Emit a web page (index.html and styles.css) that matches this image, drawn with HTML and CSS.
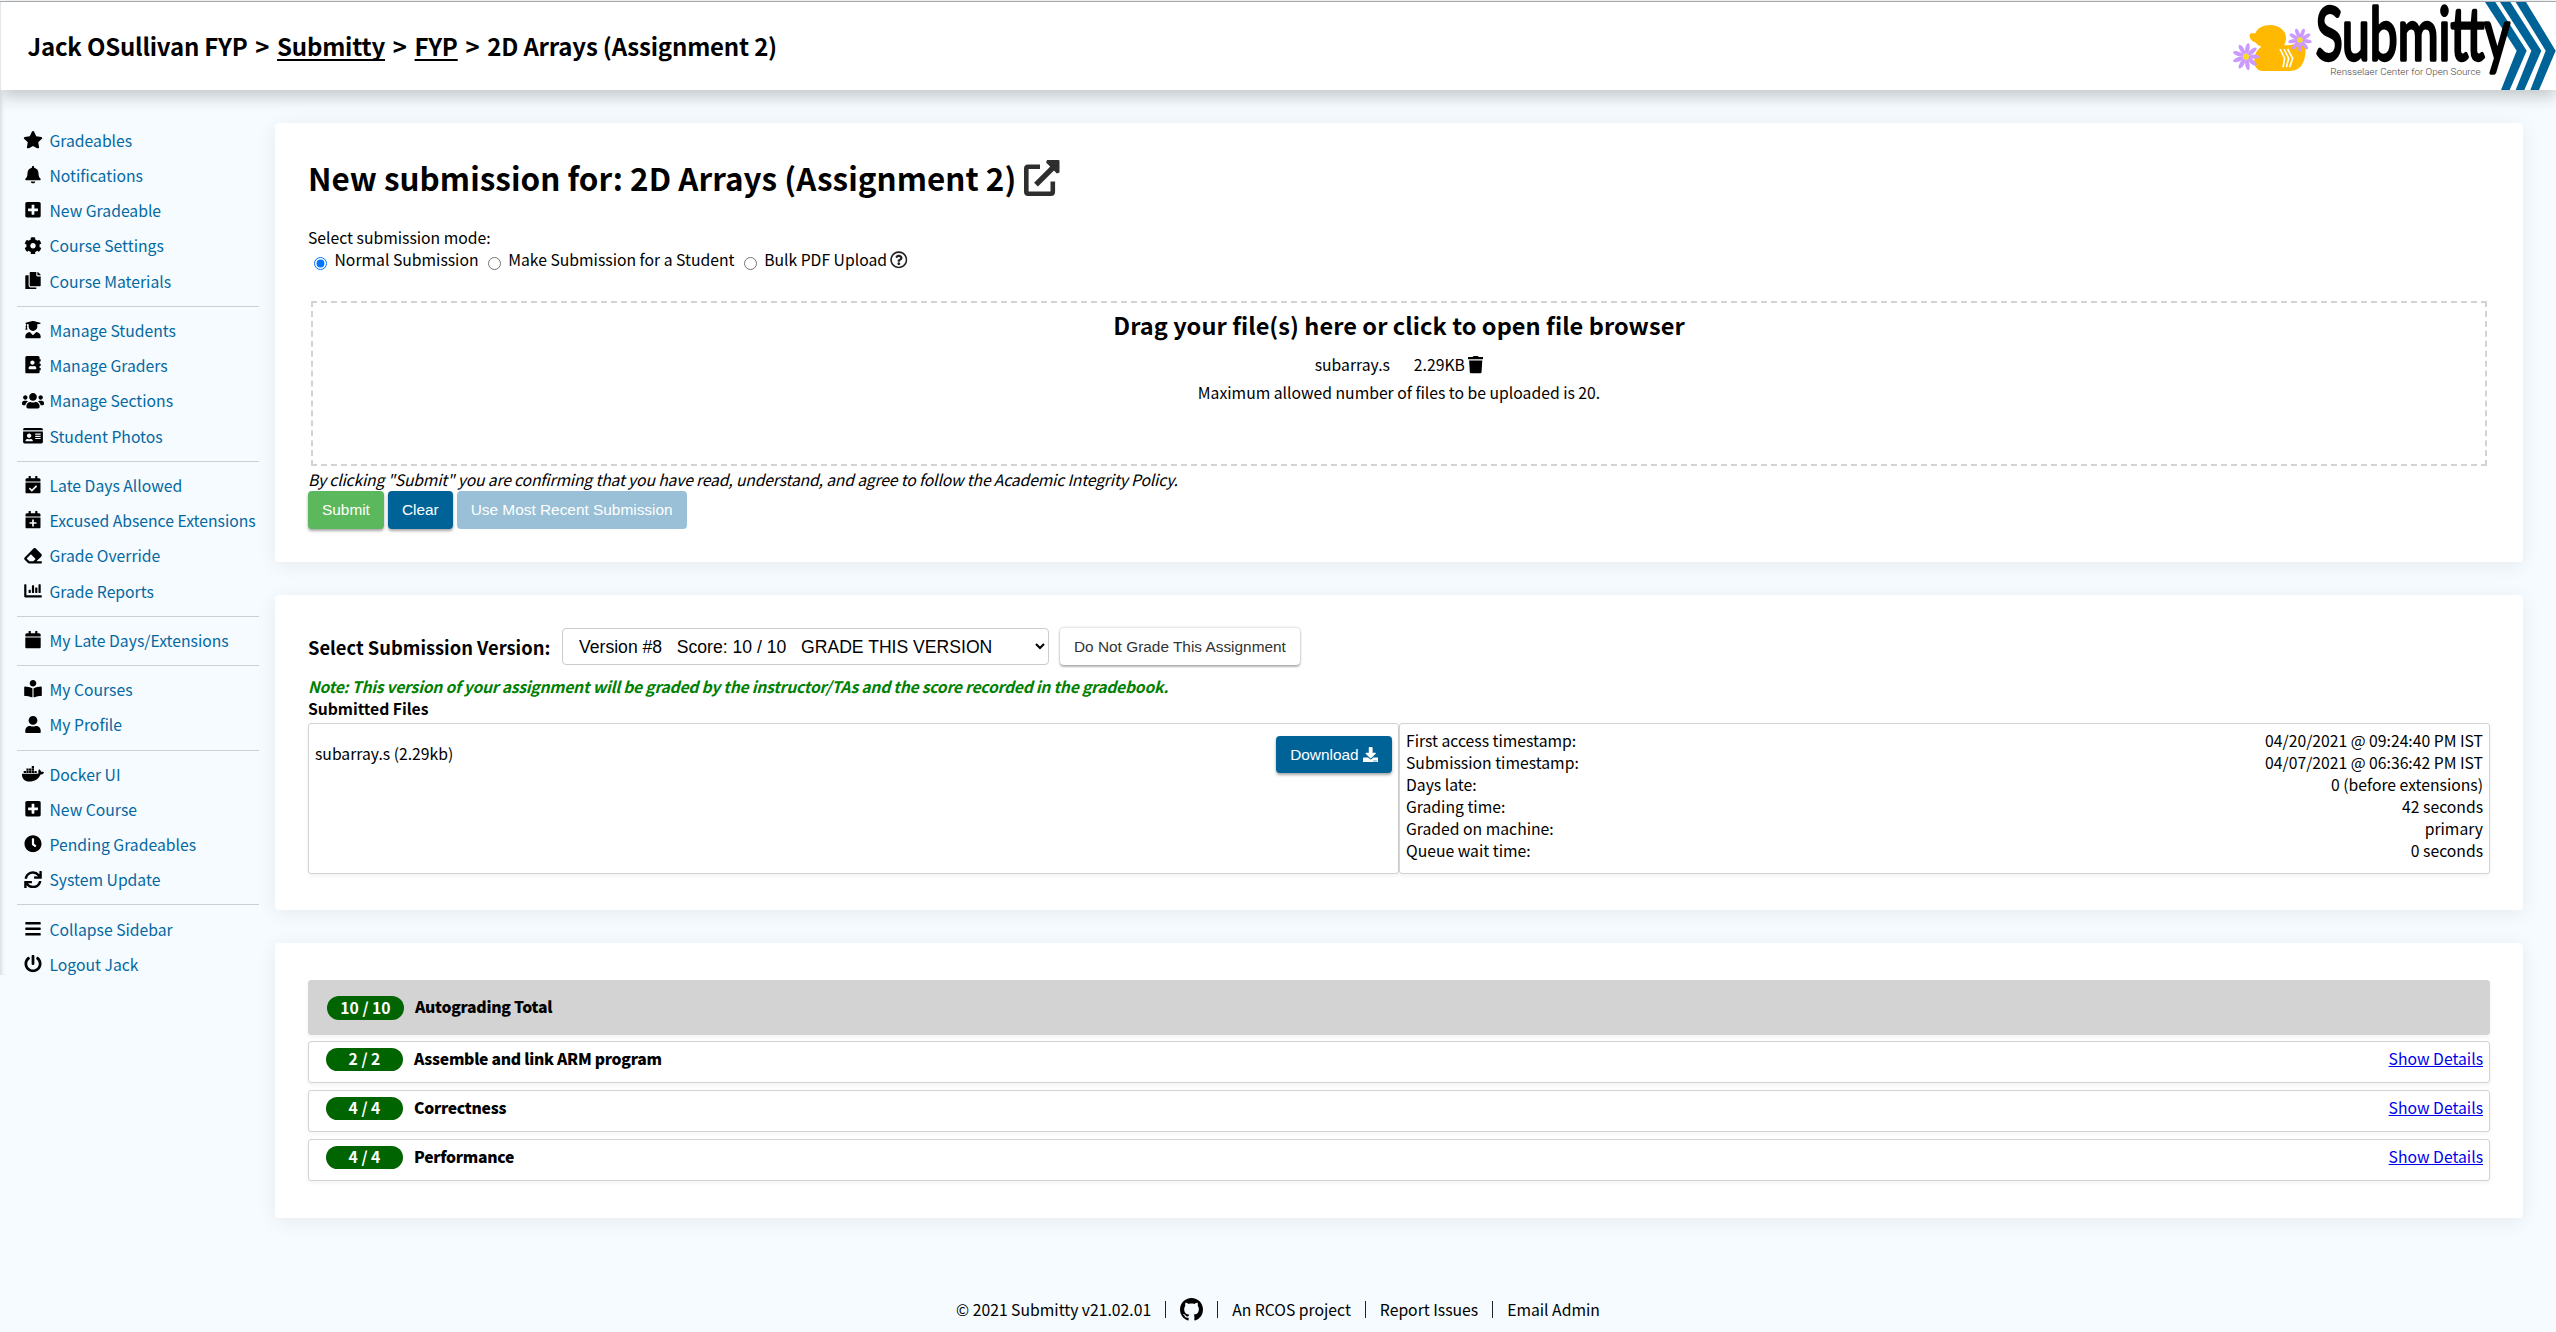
FILE: index.html
```html
<!DOCTYPE html>
<html lang="en">
<head>
<meta charset="utf-8">
<title>Submitty - 2D Arrays (Assignment 2)</title>
<link rel="stylesheet" href="styles.css">
</head>
<body>
<svg class="sprite" xmlns="http://www.w3.org/2000/svg">
  <symbol id="star" viewBox="0 0 576 512"><path d="M259.3 17.8L194 150.2 47.9 171.5c-26.2 3.8-36.7 36.1-17.7 54.6l105.7 103-25 145.5c-4.5 26.3 23.2 46 46.4 33.7L288 439.6l130.7 68.7c23.2 12.2 50.9-7.4 46.4-33.7l-25-145.5 105.7-103c19-18.5 8.5-50.8-17.7-54.6L382 150.2 316.7 17.8c-11.7-23.6-45.6-23.9-57.4 0z"/></symbol>
  <symbol id="bell" viewBox="0 0 448 512"><path d="M224 512c35.32 0 63.97-28.65 63.97-64H160.03c0 35.35 28.65 64 63.97 64zm215.39-149.71c-19.32-20.76-55.47-51.99-55.47-154.29 0-77.7-54.48-139.9-127.94-155.16V32c0-17.67-14.32-32-31.98-32s-31.98 14.33-31.98 32v20.84C118.56 68.1 64.08 130.3 64.08 208c0 102.3-36.15 133.53-55.47 154.29-6 6.45-8.66 14.16-8.61 21.71.11 16.4 12.98 32 32.1 32h383.8c19.12 0 32-15.6 32.1-32 .05-7.55-2.61-15.27-8.61-21.71z"/></symbol>
  <symbol id="plus-square" viewBox="0 0 448 512"><path d="M400 32H48C21.5 32 0 53.5 0 80v352c0 26.5 21.5 48 48 48h352c26.5 0 48-21.5 48-48V80c0-26.5-21.5-48-48-48zm-32 252c0 6.6-5.4 12-12 12h-92v92c0 6.6-5.4 12-12 12h-56c-6.6 0-12-5.4-12-12v-92H92c-6.6 0-12-5.4-12-12v-56c0-6.6 5.4-12 12-12h92v-92c0-6.6 5.4-12 12-12h56c6.6 0 12 5.4 12 12v92h92c6.6 0 12 5.4 12 12v56z"/></symbol>
  <symbol id="cog" viewBox="0 0 512 512"><path d="M487.4 315.7l-42.6-24.6c4.3-23.2 4.3-47 0-70.2l42.6-24.6c4.9-2.8 7.1-8.6 5.5-14-11.1-35.6-30-67.8-54.7-94.6-3.8-4.1-10-5.1-14.8-2.3L380.8 110c-17.9-15.4-38.5-27.3-60.8-35.1V25.8c0-5.6-3.9-10.5-9.4-11.7-36.7-8.2-74.3-7.8-109.2 0-5.5 1.2-9.4 6.1-9.4 11.7V75c-22.2 7.9-42.8 19.8-60.8 35.1L88.7 85.5c-4.9-2.8-11-1.9-14.8 2.3-24.7 26.7-43.6 58.9-54.7 94.6-1.7 5.4.6 11.2 5.5 14L67.3 221c-4.3 23.2-4.3 47 0 70.2l-42.6 24.6c-4.9 2.8-7.1 8.6-5.5 14 11.1 35.6 30 67.8 54.7 94.6 3.8 4.1 10 5.1 14.8 2.3l42.6-24.6c17.9 15.4 38.5 27.3 60.8 35.1v49.2c0 5.6 3.9 10.5 9.4 11.7 36.7 8.2 74.3 7.8 109.2 0 5.5-1.2 9.4-6.1 9.4-11.7v-49.2c22.2-7.9 42.8-19.8 60.8-35.1l42.6 24.6c4.9 2.8 11 1.9 14.8-2.3 24.7-26.7 43.6-58.9 54.7-94.6 1.5-5.5-.7-11.3-5.6-14.1zM256 336c-44.1 0-80-35.9-80-80s35.9-80 80-80 80 35.9 80 80-35.9 80-80 80z"/></symbol>
  <symbol id="copy" viewBox="0 0 448 512"><path d="M320 448v40c0 13.255-10.745 24-24 24H24c-13.255 0-24-10.745-24-24V120c0-13.255 10.745-24 24-24h72v296c0 30.879 25.121 56 56 56h168zm0-344V0H152c-13.255 0-24 10.745-24 24v368c0 13.255 10.745 24 24 24h272c13.255 0 24-10.745 24-24V128H344c-13.2 0-24-10.8-24-24zm120.971-31.029L375.029 7.029A24 24 0 0 0 358.059 0H352v96h96v-6.059a24 24 0 0 0-7.029-16.97z"/></symbol>
  <symbol id="graduate" viewBox="0 0 448 512"><path d="M319.4 320.6L224 416l-95.4-95.4C57.1 323.7 0 382.2 0 454.4v9.6c0 26.5 21.5 48 48 48h352c26.5 0 48-21.5 48-48v-9.6c0-72.2-57.1-130.7-128.6-133.8zM13.6 79.8l6.4 1.5v58.4c-7 4.2-12 11.5-12 20.3 0 8.4 4.6 15.4 11.1 19.7L3.5 242c-1.7 6.9 2.1 14 7.6 14h41.8c5.5 0 9.3-7.1 7.6-14l-15.6-62.3C51.4 175.4 56 168.4 56 160c0-8.8-5-16.1-12-20.3V87.1l66 15.9c-8.6 17.2-14 36.4-14 57 0 70.7 57.3 128 128 128s128-57.3 128-128c0-20.6-5.3-39.8-14-57l96.3-23.2c18.2-4.4 18.2-27.1 0-31.5l-190.4-46c-13-3.1-26.7-3.1-39.7 0L13.6 48.2c-18.1 4.4-18.1 27.2 0 31.6z"/></symbol>
  <symbol id="address-book" viewBox="0 0 448 512"><path d="M436 160c6.6 0 12-5.4 12-12v-40c0-6.6-5.4-12-12-12h-20V48c0-26.5-21.5-48-48-48H48C21.5 0 0 21.5 0 48v416c0 26.5 21.5 48 48 48h320c26.5 0 48-21.5 48-48v-48h20c6.6 0 12-5.4 12-12v-40c0-6.6-5.4-12-12-12h-20v-64h20c6.6 0 12-5.4 12-12v-40c0-6.6-5.4-12-12-12h-20v-64h20zm-228-32c35.3 0 64 28.7 64 64s-28.7 64-64 64-64-28.7-64-64 28.7-64 64-64zm112 236.8c0 10.6-10 19.2-22.4 19.2H118.4C106 384 96 375.4 96 364.8v-19.2c0-31.8 30.1-57.6 67.2-57.6h5c12.3 5.1 25.7 8 39.8 8s27.6-2.9 39.8-8h5c37.1 0 67.2 25.8 67.2 57.6v19.2z"/></symbol>
  <symbol id="users" viewBox="0 0 640 512"><path d="M96 224c35.3 0 64-28.7 64-64s-28.7-64-64-64-64 28.7-64 64 28.7 64 64 64zm448 0c35.3 0 64-28.7 64-64s-28.7-64-64-64-64 28.7-64 64 28.7 64 64 64zm32 32h-64c-17.6 0-33.5 7.1-45.1 18.6 40.3 22.1 68.9 62 75.1 109.4h66c17.7 0 32-14.3 32-32v-32c0-35.3-28.7-64-64-64zm-256 0c61.9 0 112-50.1 112-112S381.9 32 320 32 208 82.1 208 144s50.1 112 112 112zm76.8 32h-8.3c-20.8 10-43.9 16-68.5 16s-47.6-6-68.5-16h-8.3C179.6 288 128 339.6 128 403.2V432c0 26.5 21.5 48 48 48h288c26.5 0 48-21.5 48-48v-28.8c0-63.6-51.6-115.2-115.2-115.2zm-223.7-13.4C161.5 263.1 145.6 256 128 256H64c-35.3 0-64 28.7-64 64v32c0 17.7 14.3 32 32 32h65.9c6.3-47.4 34.9-87.3 75.2-109.4z"/></symbol>
  <symbol id="id-card" viewBox="0 0 576 512"><path d="M528 32H48C21.5 32 0 53.5 0 80v16h576V80c0-26.5-21.5-48-48-48zM0 432c0 26.5 21.5 48 48 48h480c26.5 0 48-21.5 48-48V128H0v304zm352-232c0-4.4 3.6-8 8-8h144c4.4 0 8 3.6 8 8v16c0 4.4-3.6 8-8 8H360c-4.4 0-8-3.6-8-8v-16zm0 64c0-4.4 3.6-8 8-8h144c4.4 0 8 3.6 8 8v16c0 4.4-3.6 8-8 8H360c-4.4 0-8-3.6-8-8v-16zm0 64c0-4.4 3.6-8 8-8h144c4.4 0 8 3.6 8 8v16c0 4.4-3.6 8-8 8H360c-4.4 0-8-3.6-8-8v-16zM176 192c35.3 0 64 28.7 64 64s-28.7 64-64 64-64-28.7-64-64 28.7-64 64-64zM67.1 396.2C75.5 370.5 99.6 352 128 352h8.2c12.3 5.1 25.7 8 39.8 8s27.6-2.9 39.8-8h8.2c28.4 0 52.5 18.5 60.9 44.2 3.2 9.9-5.2 19.8-15.6 19.8H82.7c-10.4 0-18.8-10-15.6-19.8z"/></symbol>
  <symbol id="calendar" viewBox="0 0 448 512"><path d="M12 192h424c6.6 0 12 5.4 12 12v260c0 26.5-21.5 48-48 48H48c-26.5 0-48-21.5-48-48V204c0-6.6 5.4-12 12-12zm436-44v-36c0-26.5-21.5-48-48-48h-48V12c0-6.6-5.4-12-12-12h-40c-6.6 0-12 5.4-12 12v52H160V12c0-6.6-5.4-12-12-12h-40c-6.6 0-12 5.4-12 12v52H48C21.5 64 0 85.5 0 112v36c0 6.6 5.4 12 12 12h424c6.6 0 12-5.4 12-12z"/></symbol>
  <symbol id="calendar-check" viewBox="0 0 448 512"><use href="#calendar"/><path class="cut" d="M118 352l72 72 140-138"/></symbol>
  <symbol id="calendar-plus" viewBox="0 0 448 512"><use href="#calendar"/><path class="cut" d="M224 246v204M122 348h204"/></symbol>
  <symbol id="eraser" viewBox="0 0 512 512"><path d="M497.941 273.941c18.745-18.745 18.745-49.137 0-67.882l-160-160c-18.745-18.745-49.136-18.746-67.883 0l-256 256c-18.745 18.745-18.745 49.137 0 67.882l96 96A48.004 48.004 0 0 0 144 480h356c6.627 0 12-5.373 12-12v-40c0-6.627-5.373-12-12-12H355.883l142.058-142.059zm-302.627-62.627l137.373 137.373L265.373 416H150.628l-80-80 124.686-124.686z"/></symbol>
  <symbol id="chart" viewBox="0 0 512 512"><path d="M332.8 320h38.4c6.4 0 12.8-6.4 12.8-12.8V172.8c0-6.4-6.4-12.8-12.8-12.8h-38.4c-6.4 0-12.8 6.4-12.8 12.8v134.4c0 6.4 6.4 12.8 12.8 12.8zm96 0h38.4c6.4 0 12.8-6.4 12.8-12.8V76.8c0-6.4-6.4-12.8-12.8-12.8h-38.4c-6.4 0-12.8 6.4-12.8 12.8v230.4c0 6.4 6.4 12.8 12.8 12.8zm-288 0h38.4c6.4 0 12.8-6.4 12.8-12.8v-70.4c0-6.4-6.4-12.8-12.8-12.8h-38.4c-6.4 0-12.8 6.4-12.8 12.8v70.4c0 6.4 6.4 12.8 12.8 12.8zm96 0h38.4c6.4 0 12.8-6.4 12.8-12.8V108.8c0-6.4-6.4-12.8-12.8-12.8h-38.4c-6.4 0-12.8 6.4-12.8 12.8v198.4c0 6.4 6.4 12.8 12.8 12.8zM496 384H64V80c0-8.84-7.16-16-16-16H16C7.16 64 0 71.16 0 80v336c0 17.67 14.33 32 32 32h464c8.84 0 16-7.16 16-16v-32c0-8.84-7.16-16-16-16z"/></symbol>
  <symbol id="reader" viewBox="0 0 512 512"><path d="M352 96c0-53.02-42.98-96-96-96s-96 42.98-96 96 42.98 96 96 96 96-42.98 96-96zM233.59 241.1c-59.33-36.32-155.43-46.3-203.79-49.05C13.55 191.13 0 203.51 0 219.14v222.8c0 14.33 11.59 26.28 26.49 27.05 43.66 2.29 131.99 10.68 193.04 41.43 9.37 4.72 20.48-1.71 20.48-11.87V252.56c-.01-4.67-2.32-8.95-6.42-11.46zm248.61-49.05c-48.35 2.74-144.46 12.73-203.78 49.05-4.1 2.51-6.41 6.96-6.41 11.63v245.79c0 10.19 11.14 16.63 20.54 11.9 61.04-30.72 149.32-39.11 192.97-41.4 14.9-.78 26.49-12.73 26.49-27.06V219.14c-.01-15.63-13.56-28.01-29.81-27.09z"/></symbol>
  <symbol id="user" viewBox="0 0 448 512"><path d="M224 256c70.7 0 128-57.3 128-128S294.7 0 224 0 96 57.3 96 128s57.3 128 128 128zm89.6 32h-16.7c-22.2 10.2-46.9 16-72.9 16s-50.6-5.8-72.9-16h-16.7C60.2 288 0 348.2 0 422.4V464c0 26.5 21.5 48 48 48h352c26.5 0 48-21.5 48-48v-41.6c0-74.2-60.2-134.4-134.4-134.4z"/></symbol>
  <symbol id="docker" viewBox="0 0 640 512"><path d="M349.9 236.3h-66.1v-59.4h66.1v59.4zm0-204.3h-66.1v60.7h66.1V32zm78.2 144.8H362v59.4h66.1v-59.4zm-156.3-72.1h-66.1v60.1h66.1v-60.1zm78.1 0h-66.1v60.1h66.1v-60.1zm276.8 100c-14.4-9.7-47.6-13.2-73.1-8.4-3.3-24-16.7-44.9-41.1-63.7l-14-9.3-9.3 14c-18.4 27.8-23.4 73.6-3.7 103.8-8.7 4.7-25.8 11.1-48.4 10.7H2.4c-8.7 50.8 5.8 116.8 44 162.1 37.1 43.9 92.7 66.2 165.4 66.2 157.4 0 273.9-72.5 328.4-204.2 21.4.4 67.6.1 91.3-45.2 1.5-2.5 6.6-13.2 8.5-17.1l-13.3-8.9zm-511.1-27.9h-66v59.4h66.1v-59.4zm78.1 0h-66.1v59.4h66.1v-59.4zm78.1 0h-66.1v59.4h66.1v-59.4zm-78.1-72.1h-66.1v60.1h66.1v-60.1z"/></symbol>
  <symbol id="clock" viewBox="0 0 512 512"><path d="M256,8C119,8,8,119,8,256S119,504,256,504,504,393,504,256,393,8,256,8Zm92.49,313h0l-20,25a16,16,0,0,1-22.49,2.5h0l-67-49.72a40,40,0,0,1-15-31.23V112a16,16,0,0,1,16-16h32a16,16,0,0,1,16,16V256l58,42.5A16,16,0,0,1,348.49,321Z"/></symbol>
  <symbol id="sync" viewBox="0 0 512 512"><path d="M440.65 12.57l4 82.77A247.16 247.16 0 0 0 255.83 8C134.73 8 33.91 94.92 12.29 209.82A12 12 0 0 0 24.09 224h49.05a12 12 0 0 0 11.67-9.26 175.91 175.91 0 0 1 317-56.94l-101.46-4.86a12 12 0 0 0-12.57 12v47.41a12 12 0 0 0 12 12H500a12 12 0 0 0 12-12V12a12 12 0 0 0-12-12h-47.37a12 12 0 0 0-11.98 12.57zM255.83 432a175.61 175.61 0 0 1-146-77.8l101.8 4.87a12 12 0 0 0 12.57-12v-47.4a12 12 0 0 0-12-12H12a12 12 0 0 0-12 12V500a12 12 0 0 0 12 12h47.35a12 12 0 0 0 12-12.6l-4.15-82.57A247.17 247.17 0 0 0 255.83 504c121.11 0 221.93-86.92 243.55-201.82a12 12 0 0 0-11.8-14.18h-49.05a12 12 0 0 0-11.67 9.26A175.86 175.86 0 0 1 255.83 432z"/></symbol>
  <symbol id="bars" viewBox="0 0 448 512"><path d="M16 132h416c8.8 0 16-7.2 16-16V76c0-8.8-7.2-16-16-16H16C7.2 60 0 67.2 0 76v40c0 8.8 7.2 16 16 16zm0 160h416c8.8 0 16-7.2 16-16v-40c0-8.8-7.2-16-16-16H16c-8.8 0-16 7.2-16 16v40c0 8.8 7.2 16 16 16zm0 160h416c8.8 0 16-7.2 16-16v-40c0-8.8-7.2-16-16-16H16c-8.8 0-16 7.2-16 16v40c0 8.8 7.2 16 16 16z"/></symbol>
  <symbol id="power" viewBox="0 0 512 512"><path d="M400 54.1c63 45 104 118.6 104 201.9 0 136.8-110.8 247.7-247.5 248C120 504.3 8.2 393 8 256.4 7.9 173.1 48.9 99.3 111.8 54.2c11.7-8.3 28-4.8 35 7.7L162.6 90c5.9 10.5 3.1 23.8-6.6 31-41.5 30.8-68 79.6-68 134.9-.1 92.3 74.5 168.1 168 168.1 91.6 0 168.6-74.2 168-169.1-.3-51.8-24.7-101.8-68.1-134-9.7-7.2-12.4-20.5-6.5-30.9l15.8-28.1c7-12.4 23.2-16.1 34.8-7.8zM296 264V24c0-13.3-10.7-24-24-24h-32c-13.3 0-24 10.7-24 24v240c0 13.3 10.7 24 24 24h32c13.3 0 24-10.7 24-24z"/></symbol>
  <symbol id="trash" viewBox="0 0 448 512"><path d="M432 32H312l-9.4-18.7A24 24 0 0 0 281.1 0H166.8a23.72 23.72 0 0 0-21.4 13.3L136 32H16A16 16 0 0 0 0 48v32a16 16 0 0 0 16 16h416a16 16 0 0 0 16-16V48a16 16 0 0 0-16-16zM53.2 467a48 48 0 0 0 47.9 45h245.8a48 48 0 0 0 47.9-45L416 128H32z"/></symbol>
  <symbol id="download" viewBox="0 0 512 512"><path d="M216 0h80c13.3 0 24 10.7 24 24v168h87.7c17.8 0 26.7 21.5 14.1 34.1L269.7 378.3c-7.5 7.5-19.8 7.5-27.3 0L90.1 226.1c-12.6-12.6-3.7-34.1 14.1-34.1H192V24c0-13.3 10.7-24 24-24zm296 376v112c0 13.3-10.7 24-24 24H24c-13.3 0-24-10.7-24-24V376c0-13.3 10.7-24 24-24h146.7l49 49c20.1 20.1 52.5 20.1 72.6 0l49-49H488c13.3 0 24 10.7 24 24zm-124 88c0-11-9-20-20-20s-20 9-20 20 9 20 20 20 20-9 20-20zm64 0c0-11-9-20-20-20s-20 9-20 20 9 20 20 20 20-9 20-20z"/></symbol>
  <symbol id="question" viewBox="0 0 512 512"><path d="M256 8C119.043 8 8 119.083 8 256c0 136.997 111.043 248 248 248s248-111.003 248-248C504 119.083 392.957 8 256 8zm0 448c-110.532 0-200-89.431-200-200 0-110.495 89.472-200 200-200 110.491 0 200 89.471 200 200 0 110.53-89.431 200-200 200zm107.244-255.2c0 67.052-72.421 68.084-72.421 92.863V300c0 6.627-5.373 12-12 12h-45.647c-6.627 0-12-5.373-12-12v-8.659c0-35.745 27.1-50.034 47.579-61.516 17.561-9.845 28.324-16.541 28.324-29.579 0-17.246-21.999-28.693-39.784-28.693-23.189 0-33.894 10.977-48.942 29.969-4.057 5.12-11.46 6.071-16.666 2.124l-27.824-21.098c-5.107-3.872-6.251-11.066-2.644-16.363C184.846 131.491 214.94 112 261.794 112c49.071 0 101.45 38.304 101.45 88.8zM298 368c0 23.159-18.841 42-42 42s-42-18.841-42-42 18.841-42 42-42 42 18.841 42 42z"/></symbol>
  <symbol id="github" viewBox="0 0 16 16"><path d="M8 0C3.58 0 0 3.58 0 8c0 3.54 2.29 6.53 5.47 7.59.4.07.55-.17.55-.38 0-.19-.01-.82-.01-1.49-2.01.37-2.53-.49-2.69-.94-.09-.23-.48-.94-.82-1.13-.28-.15-.68-.52-.01-.53.63-.01 1.08.58 1.23.82.72 1.21 1.87.87 2.33.66.07-.52.28-.87.51-1.07-1.78-.2-3.64-.89-3.64-3.95 0-.87.31-1.59.82-2.15-.08-.2-.36-1.02.08-2.12 0 0 .67-.21 2.2.82.64-.18 1.32-.27 2-.27.68 0 1.36.09 2 .27 1.53-1.04 2.2-.82 2.2-.82.44 1.1.16 1.92.08 2.12.51.56.82 1.27.82 2.15 0 3.07-1.87 3.75-3.65 3.95.29.25.54.73.54 1.48 0 1.07-.01 1.93-.01 2.2 0 .21.15.46.55.38A8.013 8.013 0 0 0 16 8c0-4.42-3.58-8-8-8z"/></symbol>
  <symbol id="external" viewBox="0 0 36 36"><path class="frame" d="M16 6.8H4.2Q2.3 6.8 2.3 8.7V31.8Q2.3 33.7 4.2 33.7H26.9Q28.8 33.7 28.8 31.8V21.5"/><path class="shaft" d="M12 24.6L30 6.6"/><path d="M23 0H34.4Q35.5 0 35.5 1.1V12.6L32.9 13.4L22.1 2.6Z"/></symbol>
</svg>

<header class="header">
  <nav class="crumbs"><span>Jack OSullivan FYP</span><span>&gt;</span><a href="#">Submitty</a><span>&gt;</span><a href="#">FYP</a><span>&gt;</span><span>2D Arrays (Assignment 2)</span></nav>
  <svg class="logo" viewBox="0 6 1008 264">
    <defs>
      <g id="flower">
        <ellipse cx="0" cy="-24" rx="6.5" ry="17"/>
        <ellipse cx="0" cy="-24" rx="6.5" ry="17" transform="rotate(40)"/>
        <ellipse cx="0" cy="-24" rx="6.5" ry="17" transform="rotate(80)"/>
        <ellipse cx="0" cy="-24" rx="6.5" ry="17" transform="rotate(120)"/>
        <ellipse cx="0" cy="-24" rx="6.5" ry="17" transform="rotate(160)"/>
        <ellipse cx="0" cy="-24" rx="6.5" ry="17" transform="rotate(200)"/>
        <ellipse cx="0" cy="-24" rx="6.5" ry="17" transform="rotate(240)"/>
        <ellipse cx="0" cy="-24" rx="6.5" ry="17" transform="rotate(280)"/>
        <ellipse cx="0" cy="-24" rx="6.5" ry="17" transform="rotate(320)"/>
      </g>
    </defs>
    <path class="duck" d="M106 100C112 84 130 75 150 75C178 75 198 92 198 114C198 123 196 129 192 135C208 138 222 134 234 126L256 140C259 178 247 213 210 213H128C112 213 103 200 103 184C103 162 110 150 124 140C116 136 111 134 108 128C96 124 89 116 89 108C87 99 96 100 106 100Z"/>
    <path class="stripes" d="M180 147L194 175L189 202M192 147L206 175L199 202M203 147L218 175L209 202"/>
    <use class="petals" href="#flower" transform="translate(78 170) rotate(10)"/><circle class="pollen" cx="78" cy="170" r="9"/>
    <use class="petals" href="#flower" transform="translate(240 120) rotate(20) scale(.87)"/><circle class="pollen" cx="240" cy="120" r="8"/>
    <g class="chevrons"><path d="M795 6H826L920 152L869 270H843L890 152Z"/><path d="M840 6H871L964 152L913 270H887L934 152Z"/><path d="M887 6H918L1007 152L957 270H931L977 152Z"/></g>
    <text class="wordmark" x="287" y="181" textLength="583" lengthAdjust="spacingAndGlyphs">Submitty</text>
    <text class="tagline" x="331" y="224" textLength="451" lengthAdjust="spacingAndGlyphs">Rensselaer Center for Open Source</text>
  </svg>
</header>

<div class="page">
  <aside class="sidebar">
    <a href="#"><i><svg><use href="#star"/></svg></i>Gradeables</a>
    <a href="#"><i><svg><use href="#bell"/></svg></i>Notifications</a>
    <a href="#"><i><svg><use href="#plus-square"/></svg></i>New Gradeable</a>
    <a href="#"><i><svg><use href="#cog"/></svg></i>Course Settings</a>
    <a href="#"><i><svg><use href="#copy"/></svg></i>Course Materials</a>
    <hr>
    <a href="#"><i><svg><use href="#graduate"/></svg></i>Manage Students</a>
    <a href="#"><i><svg><use href="#address-book"/></svg></i>Manage Graders</a>
    <a href="#"><i><svg><use href="#users"/></svg></i>Manage Sections</a>
    <a href="#"><i><svg><use href="#id-card"/></svg></i>Student Photos</a>
    <hr>
    <a href="#"><i><svg><use href="#calendar-check"/></svg></i>Late Days Allowed</a>
    <a href="#"><i><svg><use href="#calendar-plus"/></svg></i>Excused Absence Extensions</a>
    <a href="#"><i><svg><use href="#eraser"/></svg></i>Grade Override</a>
    <a href="#"><i><svg><use href="#chart"/></svg></i>Grade Reports</a>
    <hr>
    <a href="#"><i><svg><use href="#calendar"/></svg></i>My Late Days/Extensions</a>
    <hr>
    <a href="#"><i><svg><use href="#reader"/></svg></i>My Courses</a>
    <a href="#"><i><svg><use href="#user"/></svg></i>My Profile</a>
    <hr>
    <a href="#"><i><svg><use href="#docker"/></svg></i>Docker UI</a>
    <a href="#"><i><svg><use href="#plus-square"/></svg></i>New Course</a>
    <a href="#"><i><svg><use href="#clock"/></svg></i>Pending Gradeables</a>
    <a href="#"><i><svg><use href="#sync"/></svg></i>System Update</a>
    <hr>
    <a href="#"><i><svg><use href="#bars"/></svg></i>Collapse Sidebar</a>
    <a href="#"><i><svg><use href="#power"/></svg></i>Logout Jack</a>
  </aside>

  <main class="content">
    <section class="panel upload">
      <h1>New submission for: 2D Arrays (Assignment 2)<svg class="external"><use href="#external"/></svg></h1>
      <p class="line mode-title">Select submission mode:</p>
      <div class="line modes">
        <label><input type="radio" name="mode" checked>Normal Submission</label>
        <label><input type="radio" name="mode">Make Submission for a Student</label>
        <label><input type="radio" name="mode">Bulk PDF Upload</label>
        <svg class="help"><use href="#question"/></svg>
      </div>
      <div class="dropzone">
        <h2>Drag your file(s) here or click to open file browser</h2>
        <div class="line queued"><span>subarray.s</span><span class="size">2.29KB</span><svg><use href="#trash"/></svg></div>
        <p class="line limit">Maximum allowed number of files to be uploaded is 20.</p>
      </div>
      <p class="line integrity">By clicking "Submit" you are confirming that you have read, understand, and agree to follow the Academic Integrity Policy.</p>
      <div class="actions">
        <button class="btn success">Submit</button>
        <button class="btn primary">Clear</button>
        <button class="btn primary off">Use Most Recent Submission</button>
      </div>
    </section>

    <section class="panel version">
      <div class="picker">
        <label for="version">Select Submission Version:</label>
        <select id="version"><option>Version #8 &nbsp; Score: 10 / 10 &nbsp; GRADE THIS VERSION</option></select>
        <button class="btn plain">Do Not Grade This Assignment</button>
      </div>
      <p class="line note">Note: This version of your assignment will be graded by the instructor/TAs and the score recorded in the gradebook.</p>
      <p class="line files-title">Submitted Files</p>
      <div class="files">
        <div class="box file-list">
          <span class="line">subarray.s (2.29kb)</span>
          <button class="btn primary download">Download<svg><use href="#download"/></svg></button>
        </div>
        <dl class="box facts">
          <div><dt>First access timestamp:</dt><dd>04/20/2021 @ 09:24:40 PM IST</dd></div>
          <div><dt>Submission timestamp:</dt><dd>04/07/2021 @ 06:36:42 PM IST</dd></div>
          <div><dt>Days late:</dt><dd>0 (before extensions)</dd></div>
          <div><dt>Grading time:</dt><dd>42 seconds</dd></div>
          <div><dt>Graded on machine:</dt><dd>primary</dd></div>
          <div><dt>Queue wait time:</dt><dd>0 seconds</dd></div>
        </dl>
      </div>
    </section>

    <section class="panel results">
      <div class="box total"><span class="badge">10 / 10</span><b>Autograding Total</b></div>
      <div class="box result"><span class="badge">2 / 2</span><b>Assemble and link ARM program</b><a href="#">Show Details</a></div>
      <div class="box result"><span class="badge">4 / 4</span><b>Correctness</b><a href="#">Show Details</a></div>
      <div class="box result"><span class="badge">4 / 4</span><b>Performance</b><a href="#">Show Details</a></div>
    </section>
  </main>
</div>

<footer class="footer">
  <span>© 2021 Submitty v21.02.01</span><i></i><svg><use href="#github"/></svg><i></i><span>An RCOS project</span><i></i><span>Report Issues</span><i></i><span>Email Admin</span>
</footer>
</body>
</html>
```
FILE: styles.css
```css
* { box-sizing: border-box; }
html { background: #dcdcdc; }
body {
  margin: 0;
  height: 1332px;
  overflow: hidden;
  display: flex;
  flex-direction: column;
  background: #f5fbfe;
  color: #000;
  font: 15.72px/22px "Noto Sans CJK SC", "Open Sans", sans-serif;
}
h1, h2, p, dl, dd { margin: 0; }
.sprite { display: none; }
.line { height: 22px; line-height: 22px; white-space: nowrap; }

/* Header */
.header {
  flex: none;
  display: flex;
  justify-content: space-between;
  align-items: center;
  height: 89px;
  margin-top: 1px;
  border-top: 1px solid #a9a9a9;
  background: #fff;
  box-shadow: inset 2px 0 1px -1px #e2e6e8, 0 6px 16px rgba(0, 0, 0, .22);
}
.crumbs {
  display: flex;
  gap: 7.8px;
  padding-left: 27.5px;
  font-size: 24px;
  font-weight: 700;
  letter-spacing: -.2px;
  line-height: 36px;
  white-space: pre;
}
.crumbs a {
  color: inherit;
  text-decoration-thickness: 2px;
  text-underline-offset: 3px;
  text-decoration-skip-ink: none;
}
.logo { width: 336px; height: 88px; overflow: visible; }
.duck { fill: #ffb900; }
.stripes { fill: none; stroke: #fff; stroke-width: 5; }
.petals { fill: #cc99ff; }
.pollen { fill: #f5dc1e; }
.chevrons { fill: #006398; }
.wordmark {
  font: 400 218px "Lato", sans-serif;
  stroke: #000;
  stroke-width: 10;
  stroke-linejoin: round;
}
.tagline { font: 300 29px "Roboto", sans-serif; fill: #444; }

/* Layout */
.page { display: flex; }
.sidebar {
  width: 275px;
  height: 885px;
  padding: 32.3px 16px 0 17px;
  box-shadow: inset 4px 0 4px -3px #cdd3d6;
}
.sidebar a {
  display: flex;
  align-items: center;
  height: 35.2px;
  padding-top: 2px;
  color: #0468a2;
  text-decoration: none;
  white-space: nowrap;
}
.sidebar i {
  display: flex;
  justify-content: center;
  width: 32px;
  margin: -2px .5px 0 0;
}
.sidebar svg { width: 22px; height: 17.6px; fill: #000; }
.sidebar hr { height: 1px; border: 0; margin: 7.5px 0 5.7px; background: #ccd0d2; }
.cut { fill: none; stroke: #f5fbfe; stroke-width: 48; }

.content { flex: 1; padding: 33px 33px 0 0; display: flex; flex-direction: column; gap: 33px; }
.panel {
  background: #fff;
  border-radius: 4px;
  padding: 33px;
  box-shadow: 0 3px 20px rgba(0, 20, 40, .07);
}

/* Upload panel */
.upload { height: 439px; }
.upload h1 {
  display: flex;
  align-items: center;
  height: 42px;
  padding-top: 2px;
  font-size: 31.4px;
  letter-spacing: .04px;
  line-height: 40px;
  white-space: nowrap;
}
.external { width: 36px; height: 36px; margin-left: 8px; fill: #2e2e2e; stroke: #2e2e2e; stroke-width: 0; }
.frame { fill: none; stroke-width: 4.6; }
.shaft { fill: none; stroke-width: 5.4; }
.mode-title { margin-top: 29px; }
.modes { display: flex; align-items: center; }
.modes label { display: flex; align-items: center; margin-right: 3.2px; }
.modes input { width: 13px; height: 13px; margin: 7px 7.5px 0 6px; }
.help { width: 17.6px; height: 17.6px; fill: #222; }
.dropzone {
  height: 165px;
  margin: 30px 3px 0;
  border: 2px dashed #d3d3d3;
  text-align: center;
}
.dropzone h2 { margin-top: 6px; font-size: 23.55px; letter-spacing: .05px; line-height: 32px; }
.queued { display: flex; justify-content: center; align-items: center; margin-top: 13px; }
.queued .size { margin: 0 3px 0 24px; }
.queued svg { width: 15.4px; height: 17.6px; }
.limit { margin-top: 6px; }
.integrity { margin-top: 3px; font-style: italic; letter-spacing: -.168px; }
.actions { display: flex; gap: 4px; }

.btn {
  height: 38px;
  padding: 0 14px;
  border: 0;
  border-radius: 4px;
  color: #fff;
  font: 15.4px "Liberation Sans", sans-serif;
  box-shadow: 0 2px 3px rgba(0, 0, 0, .35);
  white-space: nowrap;
}
.success { background: #5cb85c; }
.primary { background: #006398; }
.off { background: #99c0d6; box-shadow: none; }
.plain { background: #fff; color: #333; height: 37px; padding: 0 14.5px; box-shadow: 0 2px 2px rgba(0, 0, 0, .25), 0 0 3px rgba(0, 0, 0, .25); }

/* Version panel */
.version { height: 315px; }
.picker { display: flex; align-items: center; height: 37px; }
.picker label { font-size: 18.33px; font-weight: 700; width: 254px; white-space: nowrap; }
.picker select {
  width: 487px;
  height: 37px;
  margin-right: 10.5px;
  padding: 0 0 0 12px;
  border: 1px solid #ccc;
  border-radius: 4px;
  background: #fff;
  color: #000;
  font: 17.6px "Liberation Sans", sans-serif;
}
.note { margin-top: 11px; color: #008000; font-weight: 700; font-style: italic; letter-spacing: -.25px; }
.files-title { font-weight: 700; letter-spacing: -.05px; }
.box {
  border: 1px solid #d3d3d3;
  border-radius: 3px;
  background: #fff;
  box-shadow: 0 2px 4px rgba(0, 0, 0, .05);
}
.files { display: grid; grid-template-columns: 1fr 1fr; height: 151px; margin-top: 3px; }
.file-list { display: flex; justify-content: space-between; padding: 12px 6px; }
.file-list .line { margin-top: 7px; }
.download { display: flex; align-items: center; gap: 4px; height: 37px; }
.download svg { width: 15.4px; height: 15.4px; fill: #fff; }
.facts { padding: 6px 6px 0; }
.facts div { display: flex; justify-content: space-between; }

/* Results panel */
.results { height: 275px; padding-top: 37px; }
.total, .result { display: flex; align-items: flex-start; font-weight: 700; }
.total b, .result b { letter-spacing: -.28px; }
.total { height: 55px; padding: 15px 18px; background: #d3d3d3; }
.result { height: 42.4px; margin-top: 6.6px; padding: 6px 6px 0 17px; }
.total + .result { margin-top: 6px; }
.badge {
  width: 77px;
  height: 23px;
  margin-right: 11px;
  border-radius: 12px;
  background: #006400;
  color: #fff;
  text-align: center;
  line-height: 22px;
}
.total .badge { height: 24px; line-height: 23px; }
.result a { margin-left: auto; color: #00e; font-weight: 400; text-underline-offset: 1px; }

/* Footer */
.footer {
  margin-top: auto;
  height: 44.5px;
  display: flex;
  justify-content: center;
  align-items: center;
  gap: 14px;
  white-space: nowrap;
}
.footer svg { width: 23px; height: 23px; }
.footer i { width: 1px; height: 17px; background: #222; }
```
